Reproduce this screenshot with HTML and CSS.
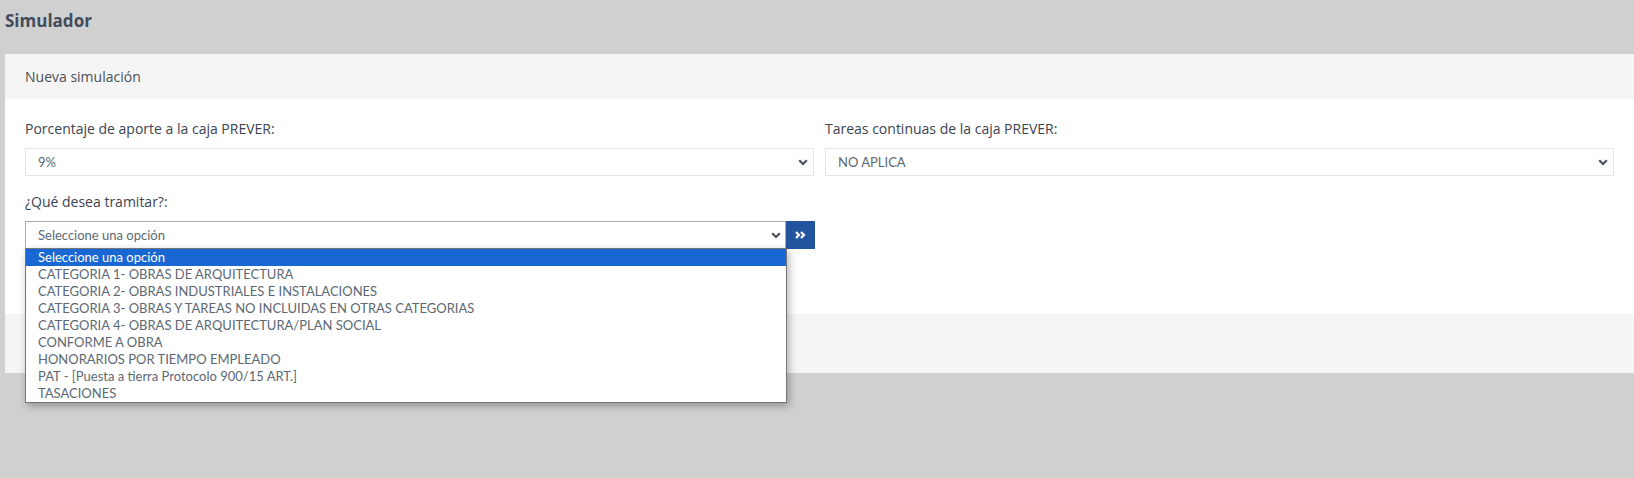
FILE: index.html
```html
<!DOCTYPE html>
<html lang="es">
<head>
<meta charset="utf-8">
<title>Simulador</title>
<link rel="stylesheet" href="styles.css">
</head>
<body>
<h1 class="page-title">Simulador</h1>
<div class="card">
  <div class="card-header">Nueva simulación</div>
  <div class="card-body">
    <div class="row">
      <div class="field">
        <label class="label">Porcentaje de aporte a la caja PREVER:</label>
        <div class="select">
          <span class="select-text">9%</span>
          <svg class="chev" width="10" height="7" viewBox="0 0 10 7"><path d="M1.2 1.3 L5 5 L8.8 1.3" fill="none" stroke="#4a4f5f" stroke-width="2.2"/></svg>
        </div>
      </div>
      <div class="field">
        <label class="label">Tareas continuas de la caja PREVER:</label>
        <div class="select">
          <span class="select-text">NO APLICA</span>
          <svg class="chev" width="10" height="7" viewBox="0 0 10 7"><path d="M1.2 1.3 L5 5 L8.8 1.3" fill="none" stroke="#4a4f5f" stroke-width="2.2"/></svg>
        </div>
      </div>
    </div>
    <div class="row">
      <div class="field">
        <label class="label">¿Qué desea tramitar?:</label>
        <div class="input-group">
          <div class="select select-open">
            <span class="select-text">Seleccione una opción</span>
            <svg class="chev" width="10" height="7" viewBox="0 0 10 7"><path d="M1.2 1.3 L5 5 L8.8 1.3" fill="none" stroke="#4a4f5f" stroke-width="2.2"/></svg>
            <ul class="dropdown">
              <li class="option active">Seleccione una opción</li>
              <li class="option">CATEGORIA 1- OBRAS DE ARQUITECTURA</li>
              <li class="option">CATEGORIA 2- OBRAS INDUSTRIALES E INSTALACIONES</li>
              <li class="option">CATEGORIA 3- OBRAS Y TAREAS NO INCLUIDAS EN OTRAS CATEGORIAS</li>
              <li class="option">CATEGORIA 4- OBRAS DE ARQUITECTURA/PLAN SOCIAL</li>
              <li class="option">CONFORME A OBRA</li>
              <li class="option">HONORARIOS POR TIEMPO EMPLEADO</li>
              <li class="option">PAT - [Puesta a tierra Protocolo 900/15 ART.]</li>
              <li class="option">TASACIONES</li>
            </ul>
          </div>
          <button class="btn-go" type="button">
            <svg width="11" height="8" viewBox="0 0 11 8"><path d="M1 1 L4 4 L1 7 M6 1 L9 4 L6 7" fill="none" stroke="#ffffff" stroke-width="2.2"/></svg>
          </button>
        </div>
      </div>
      <div class="field"></div>
    </div>
  </div>
  <div class="card-footer"></div>
</div>
</body>
</html>
```
FILE: styles.css
```css
* { box-sizing: border-box; }

html, body {
  margin: 0;
  padding: 0;
}

body {
  background: #d0d0d0;
  font-family: "Open Sans", "Noto Sans", sans-serif;
  color: #3c4350;
  min-height: 478px;
}

.page-title {
  margin: 0;
  padding: 9px 5px 0;
  font-size: 17px;
  line-height: 24px;
  font-weight: 700;
  color: #424c5d;
  height: 54px;
}

.card {
  margin-left: 5px;
  background: #fff;
}

.card-header {
  height: 45px;
  line-height: 45px;
  padding: 0 20px;
  background: #f5f5f5;
  font-size: 14px;
  color: #4a4f58;
}

.card-body {
  padding: 19px 20px 0;
  height: 215px;
}

.row {
  display: grid;
  grid-template-columns: 1fr 1fr;
  column-gap: 11px;
  margin-bottom: 15px;
}

.label {
  display: block;
  font-size: 14px;
  line-height: 21px;
  margin-bottom: 9px;
  color: #3c4350;
}

.select {
  position: relative;
  height: 28px;
  border: 1px solid #e4e7ea;
  background: #fff;
  display: flex;
  align-items: center;
  padding: 0 5px 0 12px;
}

.select-text {
  flex: 1;
  font-family: "Lato", "Open Sans", sans-serif;
  font-size: 13px;
  color: #5c6873;
}

.chev {
  display: block;
  flex: none;
}

.input-group {
  display: flex;
  width: 790px;
}

.input-group .select {
  flex: 1;
  border-color: #ababab;
  padding-right: 4px;
}

.btn-go {
  width: 29px;
  height: 28px;
  flex: none;
  border: 0;
  margin: 0;
  padding: 0;
  background: #23549f;
  display: flex;
  align-items: center;
  justify-content: center;
}

.btn-go svg { display: block; }

.dropdown {
  position: absolute;
  top: 26px;
  left: -1px;
  width: calc(100% + 3px);
  margin: 0;
  padding: 0;
  list-style: none;
  background: #fff;
  border: 1px solid #767676;
  box-shadow: 2px 3px 8px rgba(0, 0, 0, 0.3);
  z-index: 10;
}

.option {
  height: 17px;
  line-height: 17px;
  padding-left: 12px;
  font-family: "Lato", "Open Sans", sans-serif;
  font-size: 13px;
  color: #5c6873;
  white-space: nowrap;
}

.option.active {
  background: #1967d2;
  color: #fff;
}

.card-footer {
  height: 59px;
  background: #f5f5f5;
}
```
